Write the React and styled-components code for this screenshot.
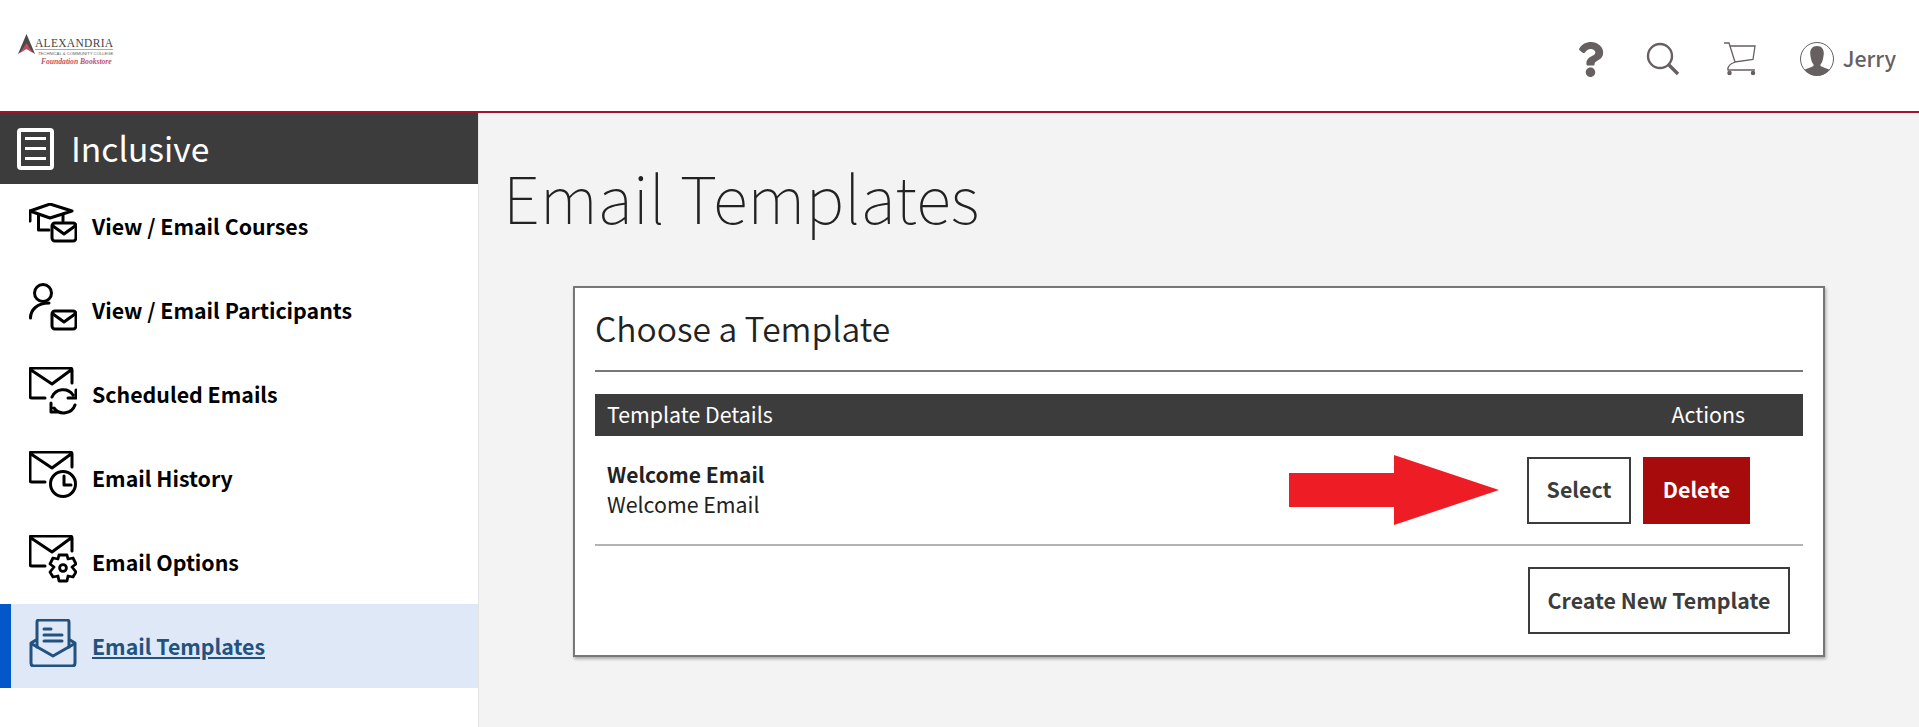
import React from 'react';
import styled, { createGlobalStyle } from 'styled-components';
import { FaQuestion } from 'react-icons/fa';

const GlobalStyle = createGlobalStyle`
    html, body {
        margin: 0;
        padding: 0;
        height: 100%;
        overflow: hidden;
        background: #f3f3f3;
        font-family: "Noto Sans CJK SC", "Open Sans", sans-serif;
    }
    * { box-sizing: border-box; }
`;

const EnvelopeOpen = () => (
    <path d="M16 31 H3 Q1 31 1 29 V3 Q1 1 3 1 H41 Q43 1 43 3 V16 M2 3 L23 17 L42 3" />
);

const SmallEnvelope = () => (
    <>
        <rect x="23" y="1" width="24" height="18" rx="3" />
        <path d="M24 4 L35 12 L46 4" />
    </>
);

const CoursesIcon = () => (
    <NavSvg viewBox="0 0 48 40" $h={40}>
        <path d="M21 1 L43 8 L21 15 L1 8 Z" />
        <path d="M1 8 V18 M9.5 12 V27 H20" />
        <path d="M34 12 V18" />
        <g transform="translate(0 19)"><SmallEnvelope /></g>
    </NavSvg>
);

const ParticipantsIcon = () => (
    <NavSvg viewBox="0 0 48 48" $h={48}>
        <circle cx="14" cy="10" r="8.5" />
        <path d="M1.5 35 C1.5 27 8 20 20 20" />
        <g transform="translate(0 27)"><SmallEnvelope /></g>
    </NavSvg>
);

const ScheduledIcon = () => (
    <NavSvg viewBox="0 0 48 48" $h={48}>
        <EnvelopeOpen />
        <path d="M23 30 A12 12 0 0 1 44 28 M47 23 V31 H39" />
        <path d="M46 38 A12 12 0 0 1 25 41 M22 36 V45 H30" />
    </NavSvg>
);

const HistoryIcon = () => (
    <NavSvg viewBox="0 0 48 48" $h={48}>
        <EnvelopeOpen />
        <circle cx="34" cy="33" r="12.5" />
        <path d="M35 25 V34 H42" />
    </NavSvg>
);

const OptionsIcon = () => (
    <NavSvg viewBox="0 0 48 48" $h={48}>
        <EnvelopeOpen />
        <path d="M30 20 H38 L39 24 L44 23 L47 29 L43 32 L47 37 L44 42 L39 41 L38 46 H30 L29 41 L24 42 L21 37 L25 32 L21 29 L24 23 L29 24 Z" strokeWidth="2.8" />
        <circle cx="34" cy="33" r="3.4" strokeWidth="2.8" />
    </NavSvg>
);

const TemplatesIcon = () => (
    <NavSvg viewBox="0 0 48 48" $h={48} $active>
        <path d="M8 28 V3 Q8 1 10 1 H38 Q40 1 40 3 V28" />
        <path d="M15 10 H22 M15 16 H33 M15 22 H33" />
        <path d="M7 21 L2 24 V44 Q2 47 5 47 H43 Q46 47 46 44 V24 L41 21" />
        <path d="M3 25 L24 37 L45 25" />
    </NavSvg>
);

const navItems = [
    { label: 'View / Email Courses', icon: <CoursesIcon /> },
    { label: 'View / Email Participants', icon: <ParticipantsIcon /> },
    { label: 'Scheduled Emails', icon: <ScheduledIcon /> },
    { label: 'Email History', icon: <HistoryIcon /> },
    { label: 'Email Options', icon: <OptionsIcon /> },
    { label: 'Email Templates', icon: <TemplatesIcon />, active: true },
];

const App = () => (
    <>
        <GlobalStyle />
        <Page>
            <Header>
                <Logo>
                    <LogoTop>
                        <svg width="17" height="21" viewBox="0 0 17 21">
                            <path d="M8.5 0 L17 20 L8.5 14 L0 20 Z" fill="#2b2b2b" />
                            <path d="M8.5 9 L15 19 L8.5 15 L2 19 Z" fill="#b5304a" />
                        </svg>
                        <LogoName>
                            <LogoTitle>ALEXANDRIA</LogoTitle>
                            <LogoSub>TECHNICAL &amp; COMMUNITY COLLEGE</LogoSub>
                        </LogoName>
                    </LogoTop>
                    <LogoStore>Foundation Bookstore</LogoStore>
                </Logo>
                <HeaderTools>
                    <FaQuestion size={35} color="#666060" />
                    <SearchIcon viewBox="0 0 34 34" width="34" height="34">
                        <circle cx="14" cy="14" r="12" />
                        <path d="M23 23 L32 32" strokeWidth="3.4" />
                    </SearchIcon>
                    <CartIcon viewBox="0 0 34 34" width="34" height="34">
                        <path d="M1 1 H6 L12 20 L30 17.5 L32 4 H7" />
                        <path d="M12 20 Q4 23 5 28 H32" />
                        <circle cx="6.5" cy="31" r="1.6" fill="#666060" />
                        <circle cx="30" cy="31" r="1.6" fill="#666060" />
                    </CartIcon>
                    <UserBlock>
                        <svg viewBox="0 0 36 36" width="36" height="36">
                            <circle cx="18" cy="18" r="16.5" fill="#fff" stroke="#666060" strokeWidth="1" />
                            <path d="M18 5 C12 5 10.5 10 11.5 15 C12 19 13 22 14.5 23.5 V25 C11 27 7 27.5 5.5 29 A16.5 16.5 0 0 0 30.5 29 C29 27.5 25 27 21.5 25 V23.5 C23 22 24 19 24.5 15 C25.5 10 24 5 18 5 Z" fill="#666060" />
                        </svg>
                        <UserName>Jerry</UserName>
                    </UserBlock>
                </HeaderTools>
            </Header>
            <Body>
                <Sidebar>
                    <SideHead>
                        <SideHeadIcon>
                            <SideHeadLine />
                            <SideHeadLine />
                            <SideHeadLine />
                        </SideHeadIcon>
                        <SideHeadText>Inclusive</SideHeadText>
                    </SideHead>
                    {navItems.map((item) => (
                        <NavItem key={item.label} $active={item.active}>
                            <NavIconBox>{item.icon}</NavIconBox>
                            <NavLabel $active={item.active}>{item.label}</NavLabel>
                        </NavItem>
                    ))}
                </Sidebar>
                <Main>
                    <Title>Email Templates</Title>
                    <Card>
                        <CardTitle>Choose a Template</CardTitle>
                        <TableHead>
                            <span>Template Details</span>
                            <span>Actions</span>
                        </TableHead>
                        <Row>
                            <Details>
                                <DetailName>Welcome Email</DetailName>
                                <DetailText>Welcome Email</DetailText>
                            </Details>
                            <Arrow viewBox="0 0 210 70" width="210" height="70">
                                <path d="M0 18 H105 V0 L210 35 L105 70 V52 H0 Z" fill="#ee1c25" />
                            </Arrow>
                            <Button $width={104}>Select</Button>
                            <Button $width={107} $danger>Delete</Button>
                        </Row>
                        <CardFooter>
                            <Button $width={262}>Create New Template</Button>
                        </CardFooter>
                    </Card>
                </Main>
            </Body>
        </Page>
    </>
);

export default App;

const Page = styled.div`
    display: flex;
    flex-direction: column;
    height: 727px;
    overflow: hidden;
`;

const Header = styled.header`
    height: 113px;
    flex: none;
    display: flex;
    align-items: flex-start;
    justify-content: space-between;
    background: #fff;
    border-bottom: 2px solid #a5122f;
`;

const Logo = styled.div`
    margin: 34px 0 0 18px;
    width: 98px;
    opacity: 0.85;
`;

const LogoTop = styled.div`
    display: flex;
    align-items: flex-start;
`;

const LogoName = styled.div`
    display: flex;
    flex-direction: column;
    margin-top: 3px;
    white-space: nowrap;
`;

const LogoTitle = styled.span`
    font: 11.5px/12px "Liberation Serif", serif;
    letter-spacing: 0.3px;
    color: #222;
    border-bottom: 1px solid #999;
`;

const LogoSub = styled.span`
    font: 4.2px/7px "Liberation Sans", sans-serif;
    color: #444;
    margin-left: 3px;
`;

const LogoStore = styled.div`
    font: italic bold 7.6px/9px "Liberation Serif", serif;
    color: #b5304a;
    margin-left: 23px;
    white-space: nowrap;
`;

const HeaderTools = styled.div`
    display: flex;
    align-items: center;
    margin: 41px 23px 0 0;
    color: #666060;
`;

const SearchIcon = styled.svg`
    fill: none;
    stroke: #666060;
    stroke-width: 2.4;
    margin-left: 38px;
`;

const CartIcon = styled.svg`
    fill: none;
    stroke: #666060;
    stroke-width: 1.3;
    margin-left: 43px;
`;

const UserBlock = styled.div`
    display: flex;
    align-items: center;
    gap: 8px;
    margin-left: 42px;
`;

const UserName = styled.span`
    font-size: 21.33px;
    line-height: 34px;
    font-weight: 500;
    margin-top: -2px;
`;

const Body = styled.div`
    flex: 1;
    display: flex;
    min-height: 0;
`;

const Sidebar = styled.nav`
    width: 479px;
    flex: none;
    background: #fff;
    border-right: 1px solid #e4e4e4;
`;

const SideHead = styled.div`
    height: 71px;
    display: flex;
    align-items: center;
    gap: 17px;
    padding-left: 17px;
    background: #3c3c3c;
    color: #fff;
`;

const SideHeadText = styled.span`
    font-size: 33.6px;
    line-height: 66px;
    margin-top: -2px;
`;

const SideHeadIcon = styled.div`
    width: 37px;
    height: 42px;
    border: 4px solid #fff;
    border-radius: 4px;
    display: flex;
    flex-direction: column;
    justify-content: center;
    align-items: center;
    gap: 7px;
`;

const SideHeadLine = styled.div`
    width: 21px;
    height: 3px;
    background: #fff;
`;

const NavItem = styled.div`
    height: 84px;
    display: flex;
    align-items: center;
    padding-left: 18px;
    gap: 15px;
    background: ${(p) => (p.$active ? '#dfe8f7' : 'transparent')};
    border-left: 11px solid ${(p) => (p.$active ? '#0457c8' : 'transparent')};
`;

const NavIconBox = styled.div`
    width: 48px;
    height: 48px;
    margin-bottom: 6px;
    flex: none;
    display: flex;
    align-items: center;
`;

const NavSvg = styled.svg`
    width: 48px;
    height: ${(p) => p.$h}px;
    fill: none;
    stroke: ${(p) => (p.$active ? '#22527f' : '#000')};
    stroke-width: 3;
    stroke-linecap: round;
    stroke-linejoin: round;
`;

const NavLabel = styled.span`
    font-size: 21.33px;
    line-height: 30px;
    font-weight: 700;
    margin-bottom: 1px;
    color: ${(p) => (p.$active ? '#22527f' : '#000')};
    text-decoration: ${(p) => (p.$active ? 'underline' : 'none')};
`;

const Main = styled.main`
    flex: 1;
    padding-left: 24px;
    min-width: 0;
`;

const Title = styled.h1`
    margin: 0;
    height: 173px;
    padding-top: 38px;
    font-size: 65.3px;
    line-height: 90px;
    font-weight: 100;
    color: #222;
`;

const Card = styled.section`
    width: 1252px;
    height: 371px;
    margin-left: 70px;
    padding: 0 20px;
    background: #fff;
    border: 2px solid #777;
    box-shadow: 1px 2px 3px rgba(0, 0, 0, 0.3);
`;

const CardTitle = styled.h2`
    margin: 0;
    height: 84px;
    padding-top: 17px;
    border-bottom: 2px solid #777;
    font-size: 33.6px;
    line-height: 46px;
    font-weight: 350;
    color: #222;
`;

const TableHead = styled.div`
    margin-top: 22px;
    height: 42px;
    display: flex;
    align-items: center;
    justify-content: space-between;
    padding: 0 58px 4px 12px;
    background: #3c3c3c;
    color: #fff;
    font-size: 21.33px;
`;

const Row = styled.div`
    height: 110px;
    display: flex;
    align-items: center;
    padding: 0 53px 0 12px;
    border-bottom: 2px solid #b3b3b3;
`;

const Details = styled.div`
    flex: 1;
    color: #222;
    line-height: 29px;
    margin-bottom: 2px;
`;

const DetailName = styled.div`
    font-size: 21px;
    font-weight: 700;
`;

const DetailText = styled.div`
    font-size: 21.33px;
    font-weight: 400;
`;

const Arrow = styled.svg`
    margin-right: 28px;
`;

const Button = styled.div`
    width: ${(p) => p.$width}px;
    height: 67px;
    padding-bottom: 3px;
    display: flex;
    align-items: center;
    justify-content: center;
    font-size: 21.33px;
    font-weight: 700;
    margin-left: ${(p) => (p.$danger ? '12px' : '0')};
    color: ${(p) => (p.$danger ? '#fff' : '#3c3c3c')};
    background: ${(p) => (p.$danger ? '#a80b0b' : '#fff')};
    border: 2px solid ${(p) => (p.$danger ? '#a80b0b' : '#3c3c3c')};
`;

const CardFooter = styled.div`
    display: flex;
    justify-content: flex-end;
    padding: 21px 13px 0 0;
`;
